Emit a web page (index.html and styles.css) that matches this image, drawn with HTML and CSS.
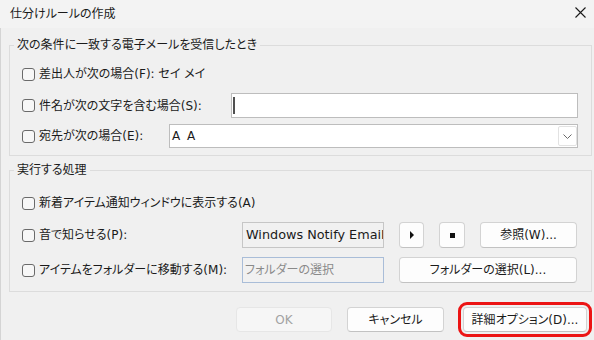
FILE: index.html
```html
<!DOCTYPE html>
<html lang="ja">
<head>
<meta charset="utf-8">
<title>仕分けルールの作成</title>
<link rel="stylesheet" href="styles.css">
</head>
<body>
<div class="window">
  <div class="titlebar">
    <span class="title">仕分けルールの作成</span>
    <svg class="close" width="11" height="11" viewBox="0 0 11 11" aria-label="閉じる">
      <path d="M0.5 0.5 L10.5 10.5 M10.5 0.5 L0.5 10.5" stroke="#1a1a1a" stroke-width="1.1" fill="none"/>
    </svg>
  </div>
  <div class="content">
    <fieldset class="group group-cond">
      <legend>次の条件に一致する電子メールを受信したとき</legend>
      <div class="row row-from">
        <label class="check"><span class="box"></span><span>差出人が次の場合(F): セイ メイ</span></label>
      </div>
      <div class="row row-subject">
        <label class="check"><span class="box"></span><span>件名が次の文字を含む場合(S):</span></label>
        <div class="text-input"><span class="caret"></span></div>
      </div>
      <div class="row row-to">
        <label class="check"><span class="box"></span><span>宛先が次の場合(E):</span></label>
        <div class="combo">
          <span class="combo-value">A A</span>
          <span class="combo-btn">
            <svg width="9" height="5" viewBox="0 0 9 5"><path d="M0.5 0.5 L4.5 4.5 L8.5 0.5" stroke="#6a6a6a" stroke-width="1" fill="none"/></svg>
          </span>
        </div>
      </div>
    </fieldset>

    <fieldset class="group group-action">
      <legend>実行する処理</legend>
      <div class="action-grid">
        <label class="check span-all"><span class="box"></span><span>新着アイテム通知ウィンドウに表示する(A)</span></label>

        <label class="check"><span class="box"></span><span>音で知らせる(P):</span></label>
        <div class="field field-readonly">Windows Notify Email</div>
        <button class="btn icon-btn" type="button"><span class="play"></span></button>
        <button class="btn icon-btn" type="button"><span class="stop"></span></button>
        <button class="btn" type="button">参照(W)...</button>

        <label class="check"><span class="box"></span><span>アイテムをフォルダーに移動する(M):</span></label>
        <div class="field field-placeholder">フォルダーの選択</div>
        <button class="btn span-rest" type="button">フォルダーの選択(L)...</button>
      </div>
    </fieldset>

    <div class="footer">
      <button class="btn btn-ok" type="button" disabled>OK</button>
      <button class="btn btn-cancel" type="button">キャンセル</button>
      <button class="btn btn-detail" type="button">詳細オプション(D)...</button>
    </div>
  </div>
</div>
</body>
</html>
```

FILE: styles.css
```css
* { box-sizing: border-box; }

html, body {
  margin: 0;
  padding: 0;
}

body {
  width: 594px;
  height: 340px;
  overflow: hidden;
  background: #f0f0f0;
  font-family: "DejaVu Sans", "Noto Sans CJK JP", sans-serif;
  font-size: 12px;
  line-height: 16px;
  color: #1a1a1a;
  font-feature-settings: "palt";
}

.window {
  height: 340px;
  display: flex;
  flex-direction: column;
}

.titlebar {
  height: 28px;
  flex: none;
  display: flex;
  align-items: center;
  justify-content: space-between;
  padding: 0 8px 0 10px;
  background: #f3f3f3;
}

.title {
  font-size: 12px;
}

.close {
  display: block;
  margin-top: -3px;
}

.content {
  flex: 1;
  padding: 9px 2px 0 8px;
  border-left: 1px solid #d4d4d4;
}

.group {
  margin: 0;
  min-width: 0;
  border: 1px solid #dcdcdc;
  padding: 0 13px 7px 4px;
}

.group legend {
  padding: 0 3px;
  line-height: 16px;
}

.group-cond legend {
  margin-top: 1px;
}

.group-action {
  margin-top: 6px;
  padding-bottom: 8px;
}

.row {
  display: flex;
  align-items: center;
  margin-left: 8px;
}

.row-from { height: 20px; margin-top: 11px; }
.row-subject { height: 25px; margin-top: 9px; }
.row-to { height: 24px; margin-top: 6px; }

.check {
  display: flex;
  align-items: center;
  gap: 4px;
  white-space: nowrap;
}

.box {
  flex: none;
  width: 13px;
  height: 13px;
  border: 1px solid #6a6a6a;
  border-radius: 3px;
  background: #f7f7f7;
}

.text-input {
  margin-left: auto;
  width: 347px;
  height: 25px;
  background: #ffffff;
  border: 1px solid #bdbdbd;
  display: flex;
  align-items: center;
  padding-left: 1px;
}

.caret {
  width: 2px;
  height: 17px;
  background: #505050;
}

.combo {
  margin-left: auto;
  width: 409px;
  height: 24px;
  background: #ffffff;
  border: 1px solid #bdbdbd;
  display: flex;
  align-items: center;
  padding: 0 0 0 2px;
}

.combo-value {
  word-spacing: 3px;
}

.combo-btn {
  margin-left: auto;
  width: 19px;
  height: 20px;
  border: 1px solid #e2e2e2;
  border-radius: 2px;
  background: #ffffff;
  display: flex;
  align-items: center;
  justify-content: center;
}

.action-grid {
  display: grid;
  grid-template-columns: 205px 142px 25px 26px 97px;
  grid-template-rows: 20px 26px 26px;
  column-gap: 15px;
  row-gap: 9px;
  align-items: center;
  margin: 15px 0 0 8px;
}

.span-all { grid-column: 1 / -1; }
.span-rest { grid-column: 3 / -1; }

.field {
  height: 26px;
  display: flex;
  align-items: center;
  padding-left: 3px;
  white-space: nowrap;
  overflow: hidden;
  background: #f1f1f1;
}

.field-readonly {
  border: 1px solid #c6c6c6;
  font-size: 12.8px;
}

.field-placeholder {
  border: 1px solid #a9bdd8;
  color: #8a8a8a;
  padding-left: 2px;
}

.btn {
  font: inherit;
  color: #1a1a1a;
  height: 26px;
  padding: 0;
  margin: 0;
  border: 1px solid #d3d3d3;
  border-bottom-color: #c2c2c2;
  border-radius: 4px;
  background: #fdfdfd;
  display: flex;
  align-items: center;
  justify-content: center;
  white-space: nowrap;
}

.play {
  width: 0;
  height: 0;
  border-left: 4px solid #111;
  border-top: 4px solid transparent;
  border-bottom: 4px solid transparent;
}

.stop {
  width: 5px;
  height: 5px;
  background: #111;
}

.footer {
  display: flex;
  justify-content: flex-end;
  margin-top: 15px;
  padding-right: 5px;
}

.footer .btn {
  height: 25px;
}

.btn-ok {
  width: 96px;
}

.btn-ok:disabled {
  background: #f6f6f6;
  border-color: #e6e6e6;
  color: #a2a2a2;
}

.btn-cancel {
  width: 97px;
  margin-left: 15px;
}

.btn-detail {
  width: 124px;
  margin-left: 19px;
  outline: 3px solid #ec1414;
  outline-offset: 2px;
}
```
